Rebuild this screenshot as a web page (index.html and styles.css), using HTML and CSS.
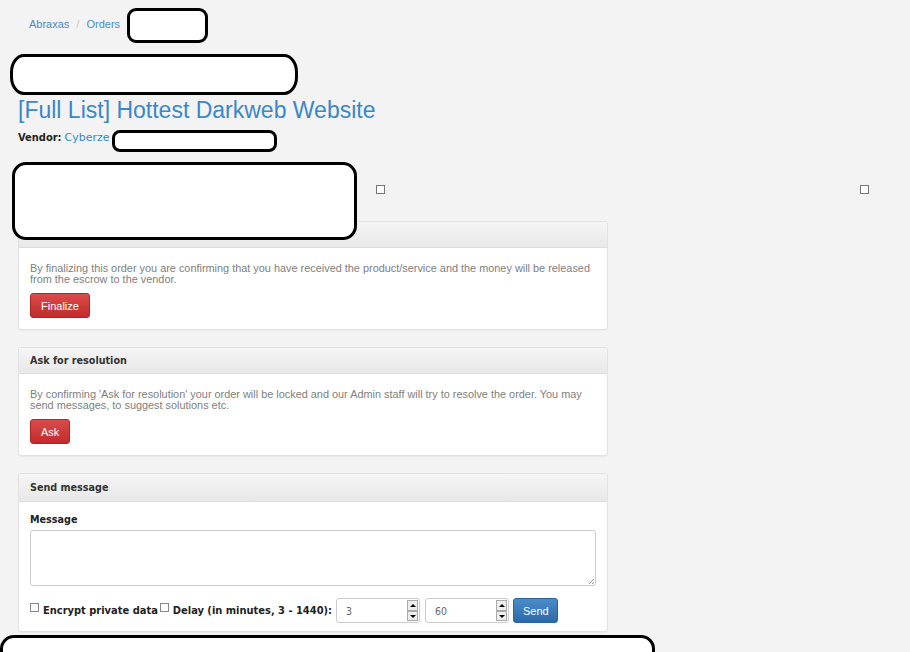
FILE: index.html
```html
<!DOCTYPE html>
<html>
<head>
<meta charset="utf-8">
<link rel="stylesheet" href="styles.css">
</head>
<body>
<div class="page">
  <div class="breadcrumb">
    <a class="crumb">Abraxas</a><span class="sep">/</span><a class="crumb">Orders</a>
  </div>
  <div class="spacer-top"></div>
  <h1 class="title">[Full List] Hottest Darkweb Website</h1>
  <div class="vendor"><b>Vendor:</b> <a class="vlink">Cyberze</a></div>
  <div class="checkrow">
    <span class="box box-a"></span>
    <span class="box box-b"></span>
  </div>

  <div class="panel">
    <div class="panel-head"></div>
    <div class="panel-body">
      <p class="note">By finalizing this order you are confirming that you have received the product/service and the money will be released from the escrow to the vendor.</p>
      <button class="btn btn-red">Finalize</button>
    </div>
  </div>

  <div class="panel">
    <div class="panel-head">Ask for resolution</div>
    <div class="panel-body">
      <p class="note">By confirming 'Ask for resolution' your order will be locked and our Admin staff will try to resolve the order. You may send messages, to suggest solutions etc.</p>
      <button class="btn btn-red">Ask</button>
    </div>
  </div>

  <div class="panel panel-msg">
    <div class="panel-head head-tall">Send message</div>
    <div class="panel-body">
      <div class="label">Message</div>
      <div class="textarea"><span class="grip"></span></div>
      <div class="controls">
        <span class="cb"></span><span class="clabel">Encrypt private data</span>
        <span class="cb"></span><span class="clabel">Delay (in minutes, 3 - 1440):</span>
        <div class="num"><span class="val">3</span><span class="spin"><span class="arr up"></span><span class="arr down"></span></span></div>
        <div class="num"><span class="val">60</span><span class="spin"><span class="arr up"></span><span class="arr down"></span></span></div>
        <button class="btn btn-blue">Send</button>
      </div>
    </div>
  </div>
</div>

<div class="redact r1"></div>
<div class="redact r2"></div>
<div class="redact r3"></div>
<div class="redact r4"></div>
<div class="redact r5"></div>
</body>
</html>
```

FILE: styles.css
```css
html, body {
  margin: 0;
  padding: 0;
  background: #f3f3f3;
  font-family: "Liberation Sans", Arial, sans-serif;
  font-size: 11px;
  color: #333;
  overflow: hidden;
}
.page {
  width: 590px;
  padding: 0 0 0 18px;
}
.breadcrumb {
  height: 48px;
  padding-left: 11px;
  display: flex;
  align-items: center;
  color: #ccc;
}
.crumb { color: #4a8cc9; }
.sep { margin: 0 7px 0 7px; color: #c8c8c8; }
.spacer-top { height: 48px; }
.title {
  margin: 0;
  font-weight: normal;
  font-size: 23px;
  line-height: 28px;
  color: #3a87c9;
  height: 29px;
}
.vendor {
  margin-top: 5px;
  height: 14px;
  line-height: 14px;
  font-size: 11px;
  color: #222;
}
.vendor b {
  font-family: "DejaVu Sans Condensed", "DejaVu Sans", sans-serif;
  font-size: 11px;
}
.vlink {
  color: #3a87c9;
  font-family: "DejaVu Sans", sans-serif;
  font-size: 11px;
}
.checkrow {
  position: relative;
  height: 77px;
}
.box {
  position: absolute;
  top: 41px;
  width: 7px;
  height: 7px;
  border: 1px solid #777;
  background: #fff;
}
.box-a { left: 358px; }
.box-b { left: 842px; }

.panel {
  background: #fff;
  border: 1px solid #e2e2e2;
  border-radius: 3px;
  margin-bottom: 17px;
  box-shadow: 0 1px 1px rgba(0,0,0,0.04);
}
.panel-head {
  height: 25px;
  line-height: 25px;
  padding: 0 11px;
  font-family: "DejaVu Sans Condensed", "DejaVu Sans", sans-serif;
  font-weight: bold;
  font-size: 10.7px;
  color: #333;
  background: linear-gradient(#f5f5f5, #e8e8e8);
  border-bottom: 1px solid #ddd;
  border-radius: 3px 3px 0 0;
}
.head-tall { height: 27px; line-height: 27px; }
.panel-body {
  padding: 15px 11px 11px 11px;
}
.note {
  margin: 0 0 8px 0;
  line-height: 11px;
  color: #808080;
  font-size: 10.9px;
}
.btn {
  font-family: "Liberation Sans", Arial, sans-serif;
  font-size: 11px;
  color: #fff;
  border-radius: 3px;
  height: 25px;
  padding: 0 10px;
  cursor: pointer;
}
.btn-red {
  background: linear-gradient(#db4b4b, #c12b2b);
  border: 1px solid #b42424;
}
.btn-blue {
  background: linear-gradient(#4a8cca, #2c6aa8);
  border: 1px solid #2a639c;
  padding: 0 9px;
  margin-left: 1px;
  width: 45px;
}
.panel-msg .panel-body { padding-top: 11px; padding-bottom: 8px; }
.label {
  font-family: "DejaVu Sans Condensed", "DejaVu Sans", sans-serif;
  font-weight: bold;
  font-size: 10.7px;
  color: #222;
  line-height: 14px;
  margin-bottom: 3px;
}
.textarea {
  position: relative;
  height: 54px;
  border: 1px solid #ccc;
  border-radius: 3px;
  background: #fff;
  margin-bottom: 12px;
}
.grip {
  position: absolute;
  right: 1px;
  bottom: 1px;
  width: 5px;
  height: 5px;
  background: linear-gradient(135deg, transparent 45%, #999 46%, #999 54%, transparent 55%, transparent 75%, #999 76%, #999 84%, transparent 85%);
}
.controls {
  display: flex;
  align-items: center;
  height: 25px;
}
.cb {
  width: 7px;
  height: 7px;
  border: 1px solid #888;
  background: #fff;
  margin-right: 4px;
  margin-top: -6px;
}
.clabel {
  font-family: "DejaVu Sans Condensed", "DejaVu Sans", sans-serif;
  font-weight: bold;
  font-size: 11px;
  color: #222;
  margin-right: 2px;
}
.num {
  width: 82px;
  height: 23px;
  border: 1px solid #ccc;
  border-radius: 3px;
  background: #fff;
  display: flex;
  align-items: center;
  justify-content: space-between;
  margin-right: 3px;
  margin-left: 2px;
}
.val {
  padding-left: 9px;
  color: #666;
  font-family: "DejaVu Sans Condensed", "DejaVu Sans", sans-serif;
  font-size: 10.5px;
}
.spin {
  display: flex;
  flex-direction: column;
  width: 11px;
  height: 21px;
  margin-right: 1px;
}
.arr {
  flex: 1;
  border: 1px solid #aaa;
  background: #eee;
  position: relative;
}
.arr::after {
  content: "";
  position: absolute;
  left: 2px;
  border-left: 3px solid transparent;
  border-right: 3px solid transparent;
}
.up::after { top: 3px; border-bottom: 3px solid #000; }
.down::after { top: 3px; border-top: 3px solid #000; }

.redact {
  position: absolute;
  background: #fff;
  border: 3px solid #000;
  box-sizing: border-box;
}
.r1 { left: 127px; top: 8px; width: 81px; height: 35px; border-radius: 9px; }
.r2 { left: 10px; top: 54px; width: 288px; height: 41px; border-radius: 14px / 18px; }
.r3 { left: 112px; top: 130px; width: 165px; height: 22px; border-radius: 8px; }
.r4 { left: 12px; top: 162px; width: 345px; height: 78px; border-radius: 14px; }
.r5 { left: 0; top: 635px; width: 655px; height: 40px; border-radius: 14px; }
```
